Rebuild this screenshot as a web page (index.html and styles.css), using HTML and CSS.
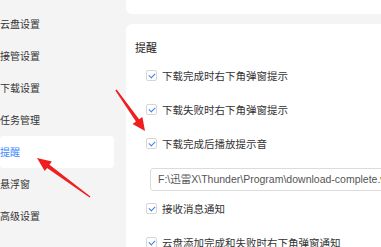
FILE: index.html
```html
<!DOCTYPE html>
<html lang="zh-CN">

<head>
  <meta charset="UTF-8">
  <meta name="viewport" content="width=device-width, initial-scale=1.0">
  <title>设置 - 提醒</title>

  <link rel="stylesheet" href="styles.css">

</head>

<body>

  <div id="app">
    <!-- 左侧菜单 -->
    <ul class="side">
      <li class="side-item">云盘设置</li>
      <li class="side-item">接管设置</li>
      <li class="side-item">下载设置</li>
      <li class="side-item">任务管理</li>
      <li class="side-item active">提醒</li>
      <li class="side-item">悬浮窗</li>
      <li class="side-item">高级设置</li>
    </ul>

    <div class="main">
      <div class="card card-top"></div>

      <section class="card card-remind">
        <h2 class="title">提醒</h2>

        <div class="opts">
          <label class="opt"><span class="check"></span>下载完成时右下角弹窗提示</label>
          <label class="opt"><span class="check"></span>下载失败时右下角弹窗提示</label>
          <div class="sound">
            <label class="opt"><span class="check"></span>下载完成后播放提示音</label>
            <div class="path">F:\迅雷X\Thunder\Program\download-complete.wav</div>
          </div>
          <label class="opt opt-msg"><span class="check"></span>接收消息通知</label>
          <label class="opt"><span class="check"></span>云盘添加完成和失败时右下角弹窗通知</label>
        </div>
      </section>
    </div>
  </div>

  <!-- 标注箭头 -->
  <svg class="marks" width="381" height="247" viewBox="0 0 381 247">
    <polygon points="37,158 51.9,161.5 49.5,164.7 90.4,196.4 89.6,197.6 47.1,167.9 44.7,171.1" />
    <polygon points="145,131 132.6,123.9 135.9,121.6 115.35,90.46 116.65,89.54 139.1,119.2 142.4,116.9" />
  </svg>

</body>

</html>
```

FILE: styles.css
```css
* {
  margin: 0;
  padding: 0;
  box-sizing: border-box;
}

body {
  width: 381px;
  height: 247px;
  overflow: hidden;
  background: #f4f4f4;
  font-family: "Noto Sans CJK SC", "Noto Sans", sans-serif;
  color: #333;
  position: relative;
}

#app {
  display: flex;
  height: 247px;
}

/* 左侧菜单 */
.side {
  list-style: none;
  width: 126px;
  flex-shrink: 0;
  padding: 8px 12px 0 0;
}

.side-item {
  height: 32px;
  line-height: 32px;
  font-size: 10px;
  color: #333;
  border-radius: 4px;
}

.side-item.active {
  background: #fff;
  color: #3d87ff;
}

/* 右侧 */
.main {
  flex: 1;
  display: flex;
  flex-direction: column;
  gap: 10px;
  min-width: 0;
}

.card {
  background: #fff;
}

.card-top {
  height: 14px;
  border-bottom-left-radius: 6px;
}

.card-remind {
  flex: 1;
  border-top-left-radius: 6px;
  padding: 15px 0 0 9px;
  overflow: hidden;
}

.title {
  font-size: 11px;
  font-weight: normal;
  line-height: 16px;
  color: #222;
}

.opts {
  display: flex;
  flex-direction: column;
  gap: 14px;
  margin-top: 10px;
  padding-left: 11px;
}

.opt {
  display: flex;
  align-items: center;
  height: 20px;
  font-size: 10.5px;
  color: #333;
  white-space: nowrap;
}

.check {
  width: 11px;
  height: 11px;
  margin-right: 5px;
  border: 1px solid #d6d6d6;
  border-radius: 2px;
  background: #fff;
  position: relative;
  flex-shrink: 0;
}

.check::after {
  content: "";
  position: absolute;
  left: 3px;
  top: 1px;
  width: 3px;
  height: 5px;
  border: solid #3d7fef;
  border-width: 0 1.6px 1.6px 0;
  transform: rotate(45deg);
}

.path {
  width: 300px;
  height: 23px;
  line-height: 21px;
  margin: 15px 0 0 4px;
  padding-left: 7px;
  border: 1px solid #dcdcdc;
  border-radius: 3px;
  font-family: "Liberation Sans", "Noto Sans CJK SC", sans-serif;
  font-size: 10.5px;
  color: #555;
  white-space: nowrap;
  overflow: hidden;
}

.opt-msg {
  margin-top: -7px;
}

/* 标注 */
.marks {
  position: absolute;
  left: 0;
  top: 0;
  pointer-events: none;
}

.marks polygon {
  fill: #ef1f1f;
}
```
